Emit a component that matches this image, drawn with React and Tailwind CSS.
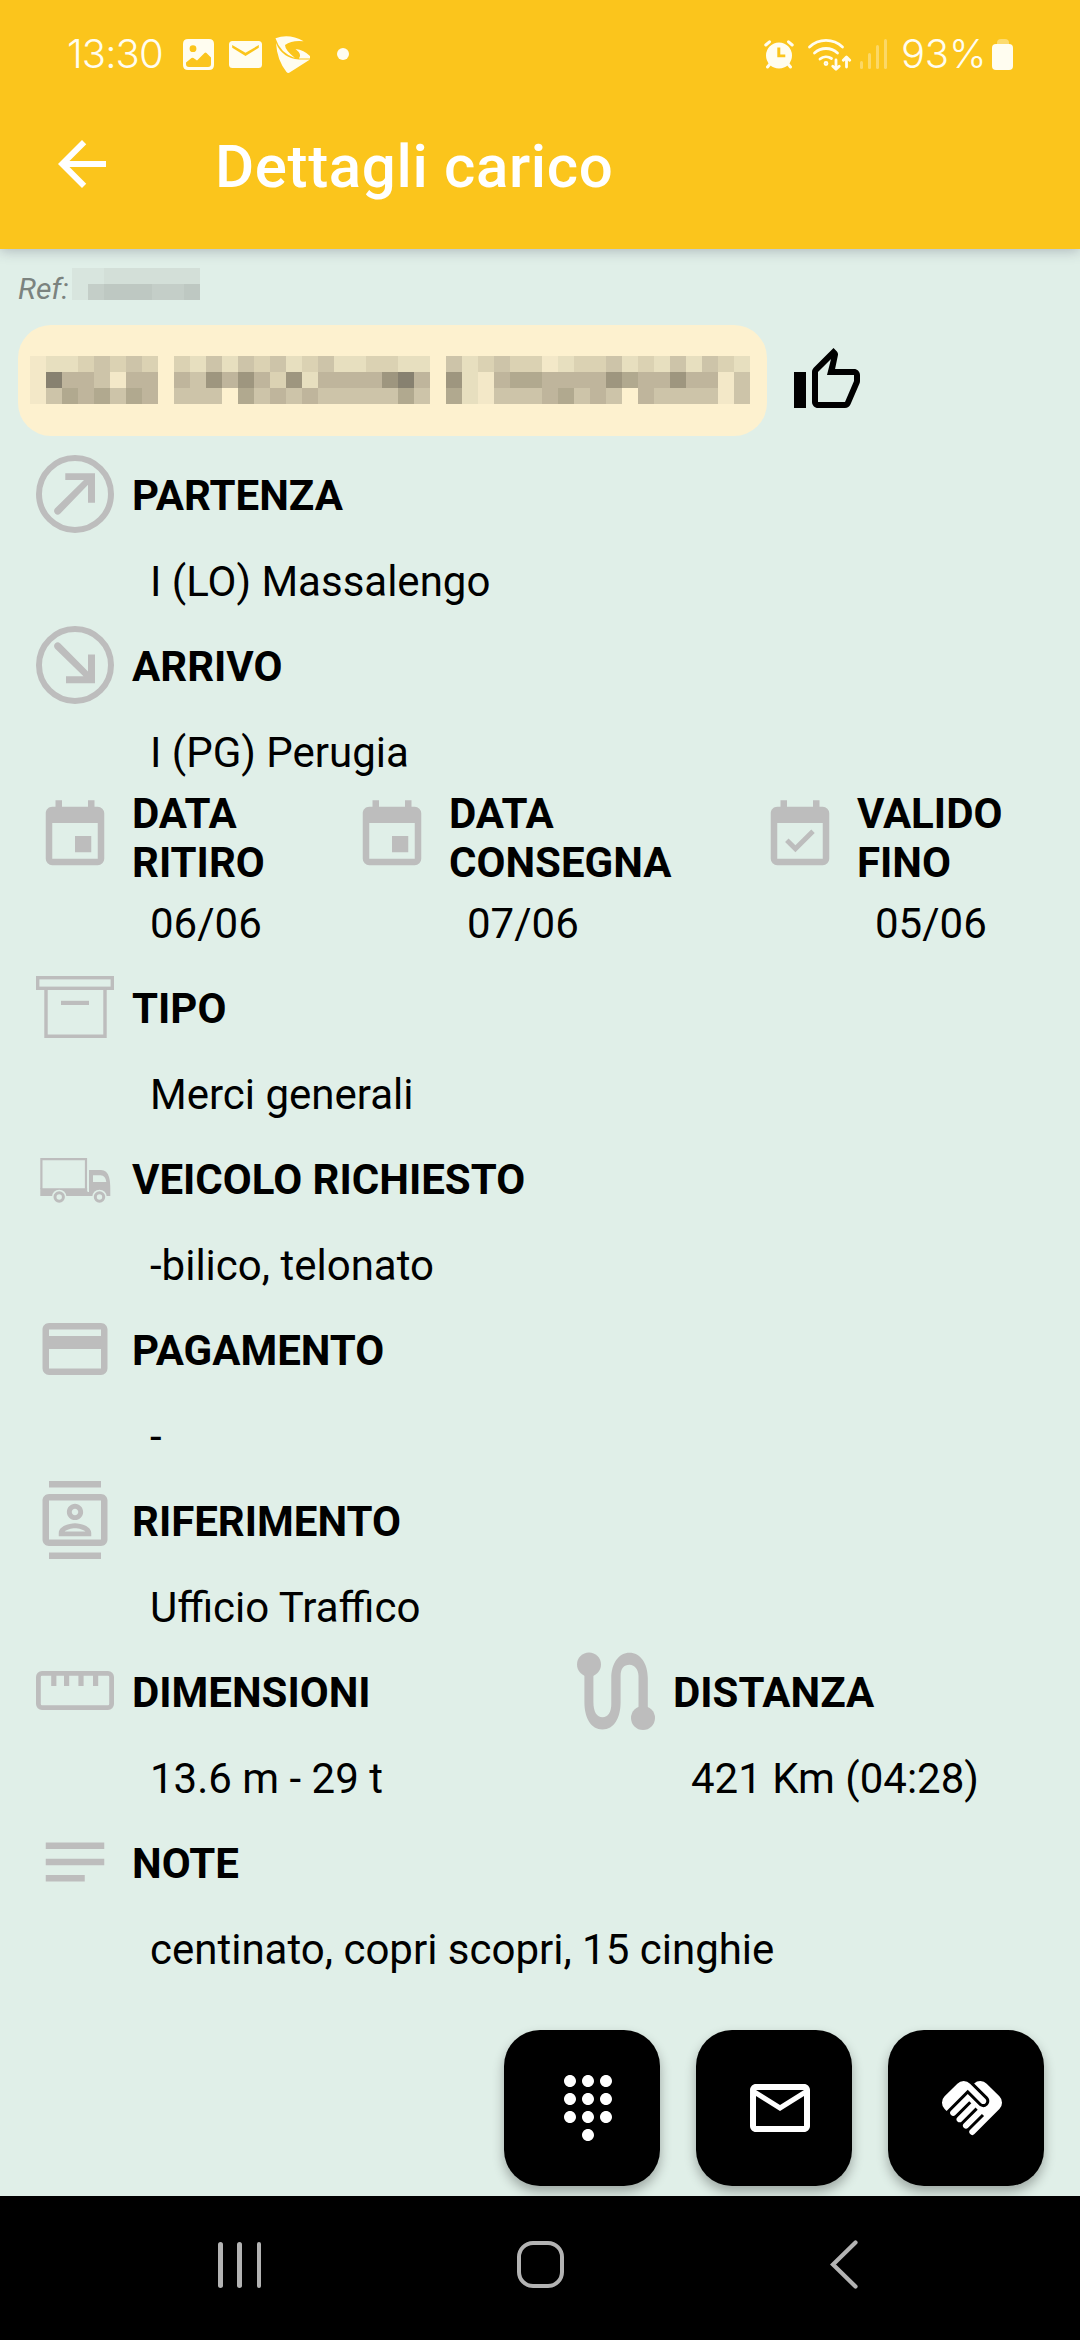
import { MdDialpad, MdHandshake, MdMailOutline, MdOutlineThumbUp } from 'react-icons/md';

// Censored company name, one digit per 16px block (0 = empty, 8 = darkest)
const NAME_BLOCKS = [
  '122343430324243423422332204234331233423242432',
  '185541550547575372555578507215665555765575514',
  '146564650444064545444446406214445645405444414',
];

const REF_BLOCKS = ['112222220', '134443340'];

const NAME_SHADES = [
  'bg-transparent',
  'bg-[#f3e8c8]',
  'bg-[#e7dfbf]',
  'bg-[#dbd2b3]',
  'bg-[#cdc4a9]',
  'bg-[#bfb59c]',
  'bg-[#b1a98f]',
  'bg-[#9e967f]',
  'bg-[#878170]',
];

const REF_SHADES = ['bg-transparent', 'bg-[#d8e5de]', 'bg-[#d3dfd8]', 'bg-[#c4cec8]', 'bg-[#bec8c2]'];

function Mosaic({ rows, shades }) {
  return (
    <div className="flex flex-col">
      {rows.map((row, y) => (
        <div key={y} className="flex">
          {row.split('').map((level, x) => (
            <span key={x} className={`h-4 w-4 ${shades[Number(level)]}`} />
          ))}
        </div>
      ))}
    </div>
  );
}

/* ---------- Field icons ---------- */

function Icon({ children, box = '0 0 24 24' }) {
  return (
    <svg viewBox={box} className="h-[78px] w-[78px] shrink-0 fill-[#bdbdbd]">
      {children}
    </svg>
  );
}

const DepartIcon = () => (
  <Icon box="0 0 78 78">
    <circle cx="39" cy="39" r="36" fill="none" stroke="#bdbdbd" strokeWidth="6" />
    <path d="M29.3 18.2H59V47.7H52V29.8L24.3 58.5Q21.7 61 19.3 58.7T19 53.5L48 25H29.3z" />
  </Icon>
);

const ArriveIcon = () => (
  <Icon box="0 0 78 78">
    <circle cx="39" cy="39" r="36" fill="none" stroke="#bdbdbd" strokeWidth="6" />
    <path d="M30 57.2H59V28.5H52V45.5L24.3 17.5Q21.7 15 19.3 17.3T19 22.5L47.5 50.2H30z" />
  </Icon>
);

const CalendarIcon = () => (
  <Icon>
    <path d="M19 19H5V8h14m-3-7v2H8V1H6v2H5c-1.11 0-2 .89-2 2v14a2 2 0 0 0 2 2h14a2 2 0 0 0 2-2V5a2 2 0 0 0-2-2h-1V1m-1 11h-5v5h5v-5z" />
  </Icon>
);

const CalendarCheckIcon = () => (
  <Icon>
    <path d="M19 19H5V8h14m0-5h-1V1h-2v2H8V1H6v2H5c-1.11 0-2 .9-2 2v14a2 2 0 0 0 2 2h14a2 2 0 0 0 2-2V5a2 2 0 0 0-2-2m-2.47 8.06L15.47 10l-4.88 4.88-2.12-2.12-1.06 1.06L10.59 17l5.94-5.94z" />
  </Icon>
);

const BoxIcon = () => (
  <Icon box="0 0 78 78">
    <g fill="none" stroke="#bdbdbd" strokeWidth="3.4">
      <rect x="1.7" y="9.7" width="74.6" height="10.6" />
      <path d="M10 20V68.2H69V20" />
    </g>
    <path d="M25 32.8h28v4.2H25z" />
  </Icon>
);

const TruckIcon = () => (
  <Icon box="0 0 78 78">
    <path d="M5.4 50V20.2H50V50" fill="none" stroke="#bdbdbd" strokeWidth="2.2" />
    <path d="M4.3 49.3H51.5V53H58V57H4.3z" />
    <path
      fillRule="evenodd"
      d="M53 31H65Q71 31 73 38Q74.5 43 74.3 53V57H53zM57 36.2V43H70.3Q69.5 36.2 64.5 36.2z"
    />
    <path d="M51.3 31h1.5v21h-1.5z" fill="#e0efe8" />
    <circle cx="23.2" cy="58" r="7.3" fill="#e0efe8" />
    <circle cx="63.5" cy="58" r="7.3" fill="#e0efe8" />
    <circle cx="23.2" cy="58" r="4.2" fill="none" stroke="#bdbdbd" strokeWidth="3" />
    <circle cx="63.5" cy="58" r="4.2" fill="none" stroke="#bdbdbd" strokeWidth="3" />
  </Icon>
);

const CardIcon = () => (
  <Icon>
    <path d="M20 8H4V6h16m0 12H4v-6h16m0-8H4c-1.11 0-2 .89-2 2v12a2 2 0 0 0 2 2h16a2 2 0 0 0 2-2V6c0-1.11-.9-2-2-2z" />
  </Icon>
);

const ContactIcon = () => (
  <Icon>
    <path d="M20 4H4c-1.1 0-2 .9-2 2v12c0 1.1.9 2 2 2h16c1.1 0 2-.9 2-2V6c0-1.1-.9-2-2-2zm0 14H4V6h16v12zM4 0h16v2H4zM4 22h16v2H4zM12 12c1.38 0 2.5-1.12 2.5-2.5S13.38 7 12 7 9.5 8.12 9.5 9.5 10.62 12 12 12zm0-3.5c.55 0 1 .45 1 1s-.45 1-1 1-1-.45-1-1 .45-1 1-1zM17 15.99c0-2.09-3.31-2.99-5-2.99s-5 .9-5 2.99V17h10v-1.01zm-8.19-.49c.61-.52 2.03-1 3.2-1 1.17 0 2.59.48 3.2 1H8.81z" />
  </Icon>
);

const RulerIcon = () => (
  <Icon box="0 0 78 78">
    <rect x="2.4" y="21.4" width="73.2" height="34.2" rx="3.6" fill="none" stroke="#bdbdbd" strokeWidth="4.8" />
    <path d="M15.2 22h5.2v12h-5.2zM28 22h5.2v12H28zM42.4 22h5.2v12h-5.2zM57 22h5.2v12H57z" />
  </Icon>
);

const RouteIcon = () => (
  <Icon box="0 0 78 78">
    <circle cx="12" cy="12.5" r="12" />
    <circle cx="66" cy="66" r="12" />
    <path d="M7.4 20V50C7.4 66 14 77.5 25.5 77.5S43.6 66 43.6 50V24C43.6 16 47 12.7 52.5 12.7S61.5 18 61.5 24V60H70.8V26C70.8 11 63 .7 52.5 .7S34.3 11 34.3 26V52C34.3 60 31 65.3 25.5 65.3S16.4 60 16.4 50V20z" />
  </Icon>
);

const NotesIcon = () => (
  <Icon>
    <path d="M3 6h18v2H3zM3 11h18v2H3zM3 16h12v2H3z" />
  </Icon>
);

/* ---------- Layout pieces ---------- */

function Field({ icon, label, value, className = '' }) {
  return (
    <div className={`h-[171px] ${className}`}>
      <div className="flex h-[78px] items-center gap-[18px]">
        {icon}
        <h2 className="mt-[3px] text-[42px] leading-[49px] font-bold whitespace-pre-line">{label}</h2>
      </div>
      <p className="pt-6 pl-[114px] text-[42px] leading-[49px] whitespace-nowrap">{value}</p>
    </div>
  );
}

function StatusBar() {
  return (
    <div className="flex h-[108px] items-center pr-[67px] pl-[67px] text-[#fffdf0]">
      <span className="w-[116px] font-['Inter',sans-serif] text-[40px] leading-none font-[350] tracking-[-0.9px]">
        13:30
      </span>
      <svg viewBox="0 0 31 31" className="h-[31px] w-[31px] fill-current">
        <path
          fillRule="evenodd"
          d="M5 0H26Q31 0 31 5V26Q31 31 26 31H5Q0 31 0 26V5Q0 0 5 0zM10 6.3a3.4 3.4 0 1 0 0 6.8 3.4 3.4 0 0 0 0-6.8zM3 23.5V25Q3 28 6 28H25Q28 28 28 25V18.5L23.5 14Q22.5 13.2 21.5 14L14 21.5 10.5 19Q9.5 18.5 8.5 19z"
        />
      </svg>
      <svg viewBox="0 0 33 27" className="ml-[15px] h-[27px] w-[33px] fill-current">
        <path
          fillRule="evenodd"
          d="M3.5 0H29.5Q33 0 33 3.5V23.5Q33 27 29.5 27H3.5Q0 27 0 23.5V3.5Q0 0 3.5 0zM3.2 4V6.8L16.5 15 29.8 6.8V4L16.5 11.8z"
        />
      </svg>
      <svg viewBox="0 0 36 37" className="ml-[13px] h-[37px] w-9 fill-current">
        <path d="M.5 2.3Q14-3 28.7 5.3 17 4 10 9 10 14 20 22 5 17 .5 2.3z" />
        <path d="M1 7Q7 22 24 23.6L35 23.4 15 36.3Q13 37.6 11.5 36 2 24 1 7z" />
        <path d="M20.5 13Q29 14 35 20V22.5H24Q27.5 18.5 20.5 13z" />
      </svg>
      <span className="ml-[26px] h-3 w-3 rounded-full bg-current" />

      <svg viewBox="0 0 30 29" className="ml-auto h-[29px] w-[30px] fill-current">
        <path
          fillRule="evenodd"
          d="M15 2.5a13 13 0 1 0 0 26 13 13 0 0 0 0-26zM13.3 7.5h3v7h5v2.7h-8z"
        />
        <g fill="none" stroke="currentColor" strokeWidth="3" strokeLinecap="round">
          <path d="M1.8 5 5.5 1.8M28.2 5 24.5 1.8M3.5 27 6 24M26.5 27 24 24" />
        </g>
      </svg>
      <svg
        viewBox="0 0 45 33"
        className="ml-[13px] h-[33px] w-[45px]"
        fill="none"
        stroke="currentColor"
        strokeWidth="2.8"
        strokeLinecap="round"
        strokeLinejoin="round"
      >
        <path d="M2.5 9A24 24 0 0 1 35.5 9M7.5 15A17 17 0 0 1 30.5 15M13 21A9.5 9.5 0 0 1 24.5 20.5" />
        <circle cx="19" cy="25.5" r="1" />
        <path d="M29 22V31M25.8 28.3 29 31.3 32.2 28.3M39.5 29V19.5M36.3 22.3 39.5 19 42.7 22.3" />
      </svg>
      <div className="ml-2 flex h-[30px] items-end gap-[4.5px] opacity-35">
        <span className="h-2 w-[3.5px] rounded-full bg-current" />
        <span className="h-4 w-[3.5px] rounded-full bg-current" />
        <span className="h-6 w-[3.5px] rounded-full bg-current" />
        <span className="h-[30px] w-[3.5px] rounded-full bg-current" />
      </div>
      <span className="ml-3.5 w-[91px] font-['Inter',sans-serif] text-[40px] leading-none font-[350] tracking-[-0.2px]">
        93%
      </span>
      <div className="flex flex-col items-center">
        <span className="h-[5px] w-3 rounded-t bg-current opacity-40" />
        <span className="h-[26px] w-[21px] rounded-[4px] bg-current" />
      </div>
    </div>
  );
}

function ActionButton({ icon: ActionIcon }) {
  return (
    <button className="flex h-[156px] w-[156px] items-center justify-center rounded-[36px] bg-black pl-3 text-white shadow-[0_6px_12px_rgba(0,0,0,0.3)]">
      <ActionIcon size={72} />
    </button>
  );
}

function NavBar() {
  return (
    <nav className="relative z-10 flex h-36 items-center bg-black pb-[7px] pl-[218px] text-[#b3b3b3]">
      <div className="flex h-[46px] w-[43px] justify-between">
        <span className="w-[4.5px] rounded-full bg-current" />
        <span className="w-[4.5px] rounded-full bg-current" />
        <span className="w-[4.5px] rounded-full bg-current" />
      </div>
      <span className="ml-[256px] h-[47px] w-[47px] rounded-[16px] border-[4.5px] border-current" />
      <svg viewBox="0 0 28 49" className="ml-[266px] h-[49px] w-7" fill="none" stroke="currentColor" strokeWidth="4.2" strokeLinecap="round">
        <path d="M25.5 2.5 3 24.5 25.5 46.5" />
      </svg>
    </nav>
  );
}

function App() {
  return (
    <div className="flex h-[2340px] w-[1080px] flex-col overflow-hidden bg-[#e0efe8] font-['Roboto',sans-serif] text-black">
      <header className="relative z-10 h-[249px] bg-[#fbc51c] shadow-[0_2px_12px_rgba(60,60,90,0.3)]">
        <StatusBar />
        <div className="flex items-start pt-5 pl-[46px] text-white">
          <svg viewBox="0 0 24 24" className="h-[72px] w-[72px] fill-current">
            <path d="M20 11H7.83l5.59-5.59L12 4l-8 8 8 8 1.41-1.41L7.83 13H20v-2z" />
          </svg>
          <h1 className="mt-1 ml-[97px] text-[60px] leading-[70px] font-medium tracking-[0.65px]">Dettagli carico</h1>
        </div>
      </header>

      <main className="flex h-[1947px] flex-col">
        {/* Reference number */}
        <div className="flex h-[76px] pt-[19px] pl-[18px]">
          <span className="mt-[3px] w-[54px] text-[30px] leading-[35px] text-[#7b837f] italic">Ref:</span>
          <Mosaic rows={REF_BLOCKS} shades={REF_SHADES} />
        </div>

        {/* Company */}
        <div className="flex h-[111px] gap-6 pl-[18px]">
          <div className="w-[749px] rounded-[33px] bg-[#fdf1cf] pt-[31px] pl-3">
            <Mosaic rows={NAME_BLOCKS} shades={NAME_SHADES} />
          </div>
          <MdOutlineThumbUp size={72} className="mt-5" />
        </div>

        {/* Load details */}
        <section className="mt-[19px] pl-9">
          <Field icon={<DepartIcon />} label="PARTENZA" value="I (LO) Massalengo" />
          <Field icon={<ArriveIcon />} label="ARRIVO" value="I (PG) Perugia" />
          <div className="flex">
            <Field icon={<CalendarIcon />} label={'DATA\nRITIRO'} value="06/06" className="w-[317px]" />
            <Field icon={<CalendarIcon />} label={'DATA\nCONSEGNA'} value="07/06" className="w-[408px]" />
            <Field icon={<CalendarCheckIcon />} label={'VALIDO\nFINO'} value="05/06" />
          </div>
          <Field icon={<BoxIcon />} label="TIPO" value="Merci generali" />
          <Field icon={<TruckIcon />} label="VEICOLO RICHIESTO" value="-bilico, telonato" />
          <Field icon={<CardIcon />} label="PAGAMENTO" value="-" />
          <Field icon={<ContactIcon />} label="RIFERIMENTO" value="Ufficio Traffico" />
          <div className="flex">
            <Field icon={<RulerIcon />} label="DIMENSIONI" value="13.6 m - 29 t" className="w-[541px]" />
            <Field icon={<RouteIcon />} label="DISTANZA" value="421 Km (04:28)" />
          </div>
          <Field icon={<NotesIcon />} label="NOTE" value="centinato, copri scopri, 15 cinghie" />
        </section>

        {/* Actions */}
        <div className="mt-9 flex justify-end gap-9 pr-9">
          <ActionButton icon={MdDialpad} />
          <ActionButton icon={MdMailOutline} />
          <ActionButton icon={MdHandshake} />
        </div>
      </main>

      <NavBar />
    </div>
  );
}

export default App;
